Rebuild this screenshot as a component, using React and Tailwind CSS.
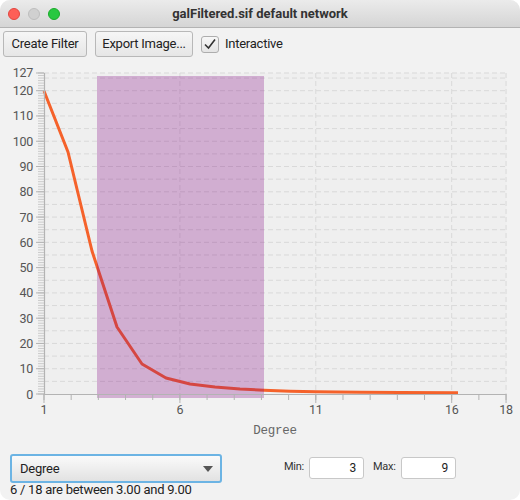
import React from "react";

const X0 = 44;
const PX = 27.18;
const Y0 = 394;
const PY = 2.5276;
const xp = (v) => X0 + (v - 1) * PX;
const yp = (v) => Y0 - v * PY;

const linePts = [
  [44, 91], [68, 152], [92, 251], [117, 327], [142, 364], [166, 378], [190, 384],
  [215, 387], [240, 389], [264, 390.3], [290, 391.2], [316, 391.8], [360, 392.3], [400, 392.6], [458, 392.8],
];

function Chart() {
  const minorY = [];
  for (let v = 0; v <= 127; v++) minorY.push(v);
  const majorY = [0, 10, 20, 30, 40, 50, 60, 70, 80, 90, 100, 110, 120, 127];
  const gridY = [];
  for (let v = 5; v <= 125; v += 5) gridY.push(v);
  gridY.push(127);
  const minorX = [];
  for (let v = 1; v <= 18; v++) minorX.push(v);
  const majorX = [1, 6, 11, 16, 18];
  const gridX = [6, 11, 16, 18];
  const font = "Roboto, 'Liberation Sans', sans-serif";
  return (
    <svg width="520" height="378" viewBox="0 60 520 378" className="block">
      <rect x={X0} y={yp(127)} width={xp(18) - X0} height={Y0 - yp(127)} fill="#efefef" />
      {gridY.map((v) => (
        <line key={"gy" + v} x1={X0} x2={xp(18)} y1={yp(v)} y2={yp(v)} stroke="#d9d9d9" strokeWidth="1" strokeDasharray="5 3" />
      ))}
      {gridX.map((v) => (
        <line key={"gx" + v} x1={xp(v)} x2={xp(v)} y1={yp(127)} y2={Y0} stroke="#d9d9d9" strokeWidth="1" strokeDasharray="5 3" />
      ))}
      <polyline
        points={linePts.map((p) => p.join(",")).join(" ")}
        fill="none"
        stroke="#f5622b"
        strokeWidth="3"
        strokeLinejoin="round"
        strokeLinecap="butt"
      />
      <rect x="97" y="76" width="167" height="322" fill="#800080" fillOpacity="0.27" />
      <line x1={X0 + 0.5} x2={X0 + 0.5} y1={yp(127)} y2={Y0} stroke="#b3b3b3" strokeWidth="1.2" />
      {minorY.map((v) => (
        <line key={"my" + v} x1={38} x2={X0} y1={yp(v)} y2={yp(v)} stroke="#c2c2c2" strokeWidth="0.8" />
      ))}
      {majorY.map((v) => (
        <line key={"My" + v} x1={36} x2={X0} y1={yp(v)} y2={yp(v)} stroke="#b3b3b3" strokeWidth="1" />
      ))}
      {majorY.map((v) => (
        <text key={"ty" + v} x={33} y={yp(v) + 4.5} textAnchor="end" fontSize="12.5" fill="#555" fontFamily={font}>
          {v}
        </text>
      ))}
      <line x1={X0} x2={xp(18)} y1={Y0 + 0.5} y2={Y0 + 0.5} stroke="#b3b3b3" strokeWidth="1.2" />
      {minorX.map((v) => (
        <line key={"mx" + v} x1={xp(v)} x2={xp(v)} y1={Y0} y2={Y0 + 6} stroke="#b3b3b3" strokeWidth="1" />
      ))}
      {majorX.map((v) => (
        <line key={"Mx" + v} x1={xp(v)} x2={xp(v)} y1={Y0} y2={Y0 + 9} stroke="#b3b3b3" strokeWidth="1" />
      ))}
      {majorX.map((v) => (
        <text key={"tx" + v} x={xp(v)} y={414} textAnchor="middle" fontSize="12.5" fill="#555" fontFamily={font}>
          {v}
        </text>
      ))}
      <text x={275} y={434} textAnchor="middle" fontSize="12.5" fill="#666" fontFamily="'Liberation Mono', 'DejaVu Sans Mono', monospace">
        Degree
      </text>
    </svg>
  );
}

export default function App() {
  return (
    <div className="w-[520px] h-[500px] bg-white">
      <div
        className="w-[520px] h-[500px] bg-[#f2f2f2] rounded-[10px] overflow-hidden flex flex-col text-[#222] tracking-[-0.25px]"
        style={{ fontFamily: "Roboto, 'Liberation Sans', sans-serif" }}
      >
        <div className="h-[28px] shrink-0 flex items-center relative bg-gradient-to-b from-[#ebebeb] to-[#d5d5d5] border-b border-[#b3b3b3]">
          <div className="flex items-center gap-[8px] pl-[8px]">
            <span className="w-[12px] h-[12px] rounded-full bg-[#fe5f57] border border-[#e2463f]" />
            <span className="w-[12px] h-[12px] rounded-full bg-[#d0d0d0] border border-[#bdbdbd]" />
            <span className="w-[12px] h-[12px] rounded-full bg-[#28c840] border border-[#1aab29]" />
          </div>
          <div className="absolute inset-0 flex items-center justify-center text-[13px] font-bold text-[#333] tracking-normal pointer-events-none">
            galFiltered.sif default network
          </div>
        </div>
        <div className="h-[32px] shrink-0 flex items-center pl-[3px]">
          <button className="h-[26px] w-[84px] rounded-[3px] border border-[#b8b8b8] bg-gradient-to-b from-[#f6f6f6] to-[#e6e6e6] text-[13px] text-[#222] flex items-center justify-center">
            Create Filter
          </button>
          <button className="ml-[8px] h-[26px] w-[98px] rounded-[3px] border border-[#b8b8b8] bg-gradient-to-b from-[#f6f6f6] to-[#e6e6e6] text-[13px] text-[#222] flex items-center justify-center">
            Export Image...
          </button>
          <div className="ml-[8px] w-[18px] h-[17px] rounded-[3px] border border-[#adadad] bg-gradient-to-b from-[#f7f7f7] to-[#e4e4e4] flex items-center justify-center">
            <svg width="14" height="12" viewBox="0 0 14 12">
              <path d="M2 6.5 L5.5 10 L12 1.5" fill="none" stroke="#333" strokeWidth="1.6" />
            </svg>
          </div>
          <span className="ml-[6px] text-[13px] text-[#222]">Interactive</span>
        </div>
        <Chart />
        <div className="flex items-start pl-[10px] pt-[16px] h-[44px] shrink-0">
          <div className="w-[212px] h-[29px] rounded-[3px] border-2 border-[#6cb4e4] bg-gradient-to-b from-[#fafafa] to-[#e2e2e2] flex items-center justify-between pl-[8px] pr-[6px]">
            <span className="text-[13px] text-[#222]">Degree</span>
            <svg width="12" height="8" viewBox="0 0 12 8">
              <path d="M1 1 L11 1 L6 7 Z" fill="#555" />
            </svg>
          </div>
          <div className="flex items-center ml-[62px] h-[25px] mt-[1px]">
            <span className="w-[25px] text-[11px] text-[#333]">Min:</span>
            <div className="w-[55px] h-[22px] bg-white border border-[#c8c8c8] rounded-[3px] flex items-center justify-end pr-[7px] text-[12px] text-[#222]">
              3
            </div>
            <span className="ml-[9px] w-[28px] text-[11px] text-[#333]">Max:</span>
            <div className="w-[55px] h-[22px] bg-white border border-[#c8c8c8] rounded-[3px] flex items-center justify-end pr-[7px] text-[12px] text-[#222]">
              9
            </div>
          </div>
        </div>
        <div className="pl-[10px] text-[13px] leading-[16px] text-[#222]">6 / 18 are between 3.00 and 9.00</div>
      </div>
    </div>
  );
}
